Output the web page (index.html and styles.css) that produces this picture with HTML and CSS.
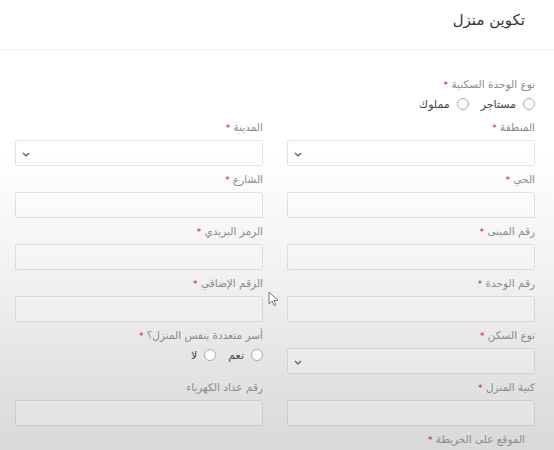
FILE: index.html
```html
<!doctype html>
<html lang="ar" dir="rtl">
<head>
  <meta charset="utf-8">
  <meta name="viewport" content="width=device-width, initial-scale=1.0">
  <title>تكوين منزل</title>
  <link rel="stylesheet" href="styles.css">
</head>
<body>

<div class="page">
  <div class="header">
    <h1>تكوين منزل</h1>
  </div>

  <form class="home-form">

    <div class="field full">
      <span class="label">نوع الوحدة السكنية <b class="req">*</b></span>
      <div class="radios">
        <label class="radio"><span class="dot"></span>مستاجر</label>
        <label class="radio"><span class="dot"></span>مملوك</label>
      </div>
    </div>

    <div class="grid">
      <div class="field">
        <span class="label">المنطقة <b class="req">*</b></span>
        <div class="input select"><svg width="8" height="5" viewBox="0 0 8 5"><path d="M1 1l3 3 3-3" fill="none" stroke="#555" stroke-width="1.2"/></svg></div>
      </div>
      <div class="field">
        <span class="label">المدينة <b class="req">*</b></span>
        <div class="input select"><svg width="8" height="5" viewBox="0 0 8 5"><path d="M1 1l3 3 3-3" fill="none" stroke="#555" stroke-width="1.2"/></svg></div>
      </div>

      <div class="field">
        <span class="label">الحي <b class="req">*</b></span>
        <div class="input"></div>
      </div>
      <div class="field">
        <span class="label">الشارع <b class="req">*</b></span>
        <div class="input"></div>
      </div>

      <div class="field">
        <span class="label">رقم المبنى <b class="req">*</b></span>
        <div class="input"></div>
      </div>
      <div class="field">
        <span class="label">الرمز البريدي <b class="req">*</b></span>
        <div class="input"></div>
      </div>

      <div class="field">
        <span class="label">رقم الوحدة <b class="req">*</b></span>
        <div class="input"></div>
      </div>
      <div class="field">
        <span class="label">الرقم الإضافي <b class="req">*</b></span>
        <div class="input"></div>
      </div>

      <div class="field">
        <span class="label">نوع السكن <b class="req">*</b></span>
        <div class="input select"><svg width="8" height="5" viewBox="0 0 8 5"><path d="M1 1l3 3 3-3" fill="none" stroke="#555" stroke-width="1.2"/></svg></div>
      </div>
      <div class="field">
        <span class="label">أسر متعددة بنفس المنزل؟ <b class="req">*</b></span>
        <div class="radios">
          <label class="radio"><span class="dot"></span>نعم</label>
          <label class="radio"><span class="dot"></span>لا</label>
        </div>
      </div>

      <div class="field">
        <span class="label">كنية المنزل <b class="req">*</b></span>
        <div class="input"></div>
      </div>
      <div class="field">
        <span class="label">رقم عداد الكهرباء</span>
        <div class="input"></div>
      </div>
    </div>

    <div class="field map">
      <span class="label">الموقع على الخريطة <b class="req">*</b></span>
    </div>

  </form>

  <!-- mouse pointer from the screenshot -->
  <svg class="cursor" width="12" height="16" viewBox="0 0 12 16">
    <path d="M1 1v12l3-3 2.2 4.6 1.8-.8L5.8 9.4H10z" fill="#fff" stroke="#777" stroke-width="1"/>
  </svg>
</div>

</body>
</html>
```

FILE: styles.css
```css
body {
  margin: 0;
  font-family: 'DejaVu Sans', 'Noto Sans', sans-serif;
}

.page {
  position: relative;
  width: 554px;
  height: 450px;
  overflow: hidden;
  background: linear-gradient(to bottom, #ffffff 0, #ffffff 150px, #f3f3f3 260px, #e2e2e2 380px, #d9d9d9 450px);
}

.header {
  height: 50px;
  padding: 0 29px;
  border-bottom: 1px solid #f0f0f0;
  box-sizing: border-box;
}

.header h1 {
  margin: 0;
  padding-top: 11px;
  font-size: 15px;
  font-weight: normal;
  color: #333;
}

.home-form {
  padding: 27px 19px 0 15px;
}

.grid {
  display: grid;
  grid-template-columns: 1fr 1fr;
  column-gap: 24px;
  row-gap: 6px;
}

.field {
  display: flex;
  flex-direction: column;
}

.label {
  height: 15px;
  line-height: 15px;
  margin-bottom: 5px;
  font-size: 10.5px;
  color: #8a8a8a;
}

.req {
  font-weight: normal;
  color: #c8102e;
  font-size: 9px;
}

.input {
  height: 26px;
  box-sizing: border-box;
  border: 1px solid rgba(0, 0, 0, 0.1);
  border-radius: 2px;
  background: rgba(255, 255, 255, 0.2);
}

.select {
  display: flex;
  align-items: center;
  justify-content: flex-end;
  padding-left: 6px;
}

.select svg {
  margin-top: 2px;
}

.radios {
  display: flex;
  gap: 12px;
  height: 16px;
  margin-top: -1px;
  margin-bottom: 6px;
}

.full .radios {
  margin-top: -1px;
  margin-bottom: 8px;
}

.radio {
  display: flex;
  align-items: center;
  gap: 7px;
  font-size: 11px;
  color: #444;
}

.dot {
  width: 10px;
  height: 10px;
  border: 1px solid #aaa;
  border-radius: 50%;
  background: #fff;
}

.map {
  margin-top: 6px;
  padding-right: 10px;
}

.cursor {
  position: absolute;
  left: 268px;
  top: 291px;
}
```
